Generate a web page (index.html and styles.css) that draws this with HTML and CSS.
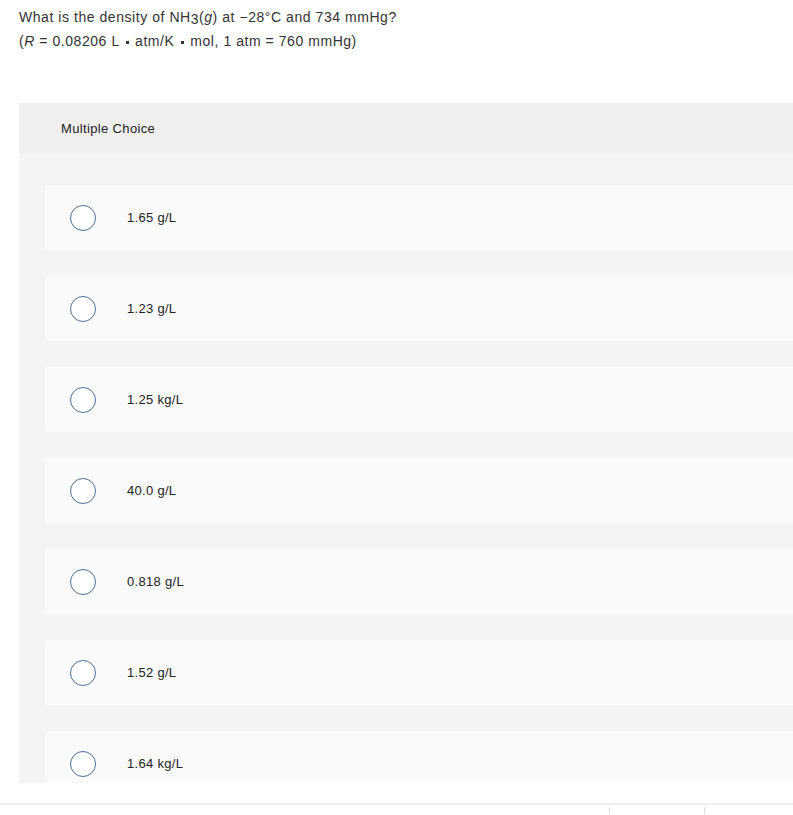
FILE: index.html
```html
<!DOCTYPE html>
<html>
<head>
<meta charset="utf-8">
<link rel="stylesheet" href="styles.css">
</head>
<body>
<div class="question">
  <p class="line">What is the density of NH<span class="sub">3</span>(<i>g</i>) at −28°C and 734 mmHg?</p>
  <p class="line">(<i>R</i> = 0.08206 L <span class="dot"></span> atm/K <span class="dot"></span> mol, 1 atm = 760 mmHg)</p>
</div>
<div class="panel">
  <div class="panel-head">Multiple Choice</div>
  <div class="options">
    <div class="option"><span class="radio"></span><span class="label">1.65 g/L</span></div>
    <div class="option"><span class="radio"></span><span class="label">1.23 g/L</span></div>
    <div class="option"><span class="radio"></span><span class="label">1.25 kg/L</span></div>
    <div class="option"><span class="radio"></span><span class="label">40.0 g/L</span></div>
    <div class="option"><span class="radio"></span><span class="label">0.818 g/L</span></div>
    <div class="option"><span class="radio"></span><span class="label">1.52 g/L</span></div>
    <div class="option"><span class="radio"></span><span class="label">1.64 kg/L</span></div>
  </div>
</div>
<div class="footer">
  <span class="tick tick-a"></span>
  <span class="tick tick-b"></span>
</div>
</body>
</html>
```
FILE: styles.css
```css
html, body {
  margin: 0;
  padding: 0;
  background: #fff;
}
body {
  font-family: "Liberation Sans", Arial, sans-serif;
  color: #333;
  width: 793px;
  height: 815px;
  overflow: hidden;
}
.question {
  padding: 5px 0 0 19px;
  font-size: 14px;
  letter-spacing: 0.55px;
}
.line {
  margin: 0;
  line-height: 24px;
  white-space: nowrap;
}
.sub {
  font-size: 14px;
  position: relative;
  top: 2px;
}
.dot {
  display: inline-block;
  width: 3px;
  height: 3px;
  background: #333;
  vertical-align: middle;
  margin: 0 2px;
}
.panel {
  margin: 50px 0 0 19px;
  height: 680px;
  overflow: hidden;
  background: #f4f4f4;
}
.panel-head {
  height: 50px;
  background: #efefef;
  display: flex;
  align-items: center;
  padding-left: 42px;
  font-size: 13px;
  letter-spacing: 0.35px;
  color: #222;
}
.options {
  padding: 32px 0 0 26px;
  display: flex;
  flex-direction: column;
  gap: 26px;
}
.option {
  height: 65px;
  flex: none;
  background: #fafafa;
  border-radius: 3px 0 0 3px;
  display: flex;
  align-items: center;
  padding-left: 25px;
}
.radio {
  width: 24px;
  height: 24px;
  border: 1.5px solid #4a6f97;
  border-radius: 50%;
  background: #fff;
  flex: none;
}
.label {
  margin-left: 31px;
  font-size: 13px;
  letter-spacing: 0.3px;
  color: #222;
}
.footer {
  margin-top: 20px;
  border-top: 2px solid #efefef;
  height: 12px;
  position: relative;
}
.tick {
  position: absolute;
  top: 2px;
  width: 1px;
  height: 7px;
  background: #ddd;
}
.tick-a { left: 609px; }
.tick-b { left: 704px; }
```
